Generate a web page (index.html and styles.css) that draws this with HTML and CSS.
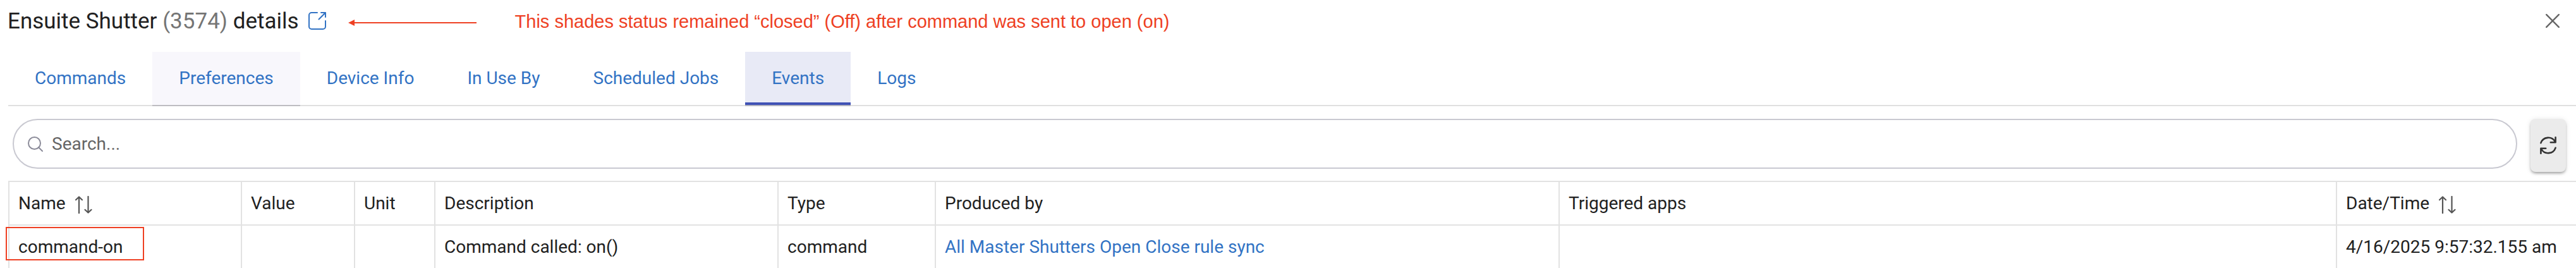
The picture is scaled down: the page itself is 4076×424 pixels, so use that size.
FILE: index.html
```html
<!DOCTYPE html>
<html lang="en">
<head>
  <meta charset="UTF-8">
  <meta name="viewport" content="width=device-width, initial-scale=1.0">
  <title>Ensuite Shutter details</title>
  <link rel="stylesheet" href="styles.css">
</head>
<body>
  <header class="title-bar">
    <h1>Ensuite Shutter <span class="device-id">(3574)</span> details</h1>
    <a class="open-link" href="#">
      <svg width="28" height="28" viewBox="0 0 28 28" fill="none" stroke="#3273c4" stroke-width="2" stroke-linecap="round" stroke-linejoin="round">
        <path d="M14 1H5a4 4 0 0 0-4 4V23a4 4 0 0 0 4 4H23a4 4 0 0 0 4-4V14"/>
        <path d="M16.500 11.500L27 1M20 1h7v7"/>
      </svg>
    </a>
    <svg class="arrow" width="203" height="10" viewBox="0 0 203 10">
      <path d="M0 5L10 0v10z" fill="#ee4023"/>
      <path d="M8 5h195" stroke="#ee4023" stroke-width="2"/>
    </svg>
    <p class="note">This shades status remained “closed” (Off) after command was sent to open (on)</p>
    <button class="close-btn" aria-label="Close">
      <svg width="22" height="22" viewBox="0 0 22 22" stroke="#666" stroke-width="2.400" stroke-linecap="round">
        <path d="M1.200 1.200l19.600 19.600M20.800 1.200L1.200 20.800"/>
      </svg>
    </button>
  </header>

  <nav class="tabs">
    <a href="#">Commands</a>
    <a href="#" class="hovered">Preferences</a>
    <a href="#">Device Info</a>
    <a href="#">In Use By</a>
    <a href="#">Scheduled Jobs</a>
    <a href="#" class="active">Events</a>
    <a href="#">Logs</a>
  </nav>

  <div class="toolbar">
    <div class="search">
      <svg width="24" height="24" viewBox="0 0 24 24" fill="none" stroke="#8b8b99" stroke-width="2">
        <circle cx="10.500" cy="10.500" r="9.500"/>
        <path d="M17 17l6 6" stroke-linecap="round"/>
      </svg>
      <span>Search...</span>
    </div>
    <button class="refresh-btn" aria-label="Refresh">
      <svg width="26" height="28" viewBox="0 0 26 28" fill="none" stroke="#333" stroke-width="2.600" stroke-linecap="round" stroke-linejoin="round">
        <path d="M1.400 10.200A12.300 12.300 0 0 1 24 8.500M24.600 1.300V9.200H16.800"/>
        <path d="M24.600 17.800A12.300 12.300 0 0 1 2 19.500M1.400 26.700V18.800H9.200"/>
      </svg>
    </button>
  </div>

  <table class="events">
    <colgroup>
      <col class="c-name"><col class="c-value"><col class="c-unit"><col class="c-desc">
      <col class="c-type"><col class="c-produced"><col class="c-apps"><col class="c-date">
    </colgroup>
    <thead>
      <tr>
        <th>Name
          <svg class="sort" width="27" height="28" viewBox="0 0 27 28" fill="none" stroke="#555" stroke-width="2.200" stroke-linecap="round" stroke-linejoin="round">
            <path d="M6 27V1.500M1 6.200l5-4.700 5 4.700M20.500 1v25.500M15.500 21.800l5 4.700 5-4.700"/>
          </svg>
        </th>
        <th>Value</th>
        <th>Unit</th>
        <th>Description</th>
        <th>Type</th>
        <th>Produced by</th>
        <th>Triggered apps</th>
        <th>Date/Time
          <svg class="sort" width="27" height="28" viewBox="0 0 27 28" fill="none" stroke="#555" stroke-width="2.200" stroke-linecap="round" stroke-linejoin="round">
            <path d="M6 27V1.500M1 6.200l5-4.700 5 4.700M20.500 1v25.500M15.500 21.800l5 4.700 5-4.700"/>
          </svg>
        </th>
      </tr>
    </thead>
    <tbody>
      <tr>
        <td class="marked">command-on</td>
        <td></td>
        <td></td>
        <td>Command called: on()</td>
        <td>command</td>
        <td><a href="#">All Master Shutters Open Close rule sync</a></td>
        <td></td>
        <td>4/16/2025 9:57:32.155 am</td>
      </tr>
    </tbody>
  </table>
</body>
</html>
```
FILE: styles.css
```css
* {
  box-sizing: border-box;
}

body {
  margin: 0;
  height: 424px;
  overflow: hidden;
  background: #fff;
  color: #212121;
  font-family: Roboto, sans-serif;
  font-size: 28px;
}

a {
  color: #3273c4;
  text-decoration: none;
}

button {
  border: none;
  padding: 0;
  background: none;
}

svg {
  display: block;
}

.title-bar {
  display: flex;
  align-items: center;
  height: 82px;
  padding: 0 26px 16px 12px;
}

h1 {
  margin: 0;
  font-size: 35px;
  font-weight: 400;
  white-space: nowrap;
}

.device-id {
  color: #757575;
}

.open-link {
  margin-left: 15px;
}

.arrow {
  margin: 6px 0 0 35px;
}

.note {
  margin: 2px 0 0 61px;
  color: #ee4023;
  font-family: "Liberation Sans", sans-serif;
  font-size: 29px;
  white-space: nowrap;
}

.close-btn {
  margin-left: auto;
}

.tabs {
  display: flex;
  height: 86px;
  margin-left: 13px;
  border-bottom: 2px solid #e0e0e0;
}

.tabs a {
  height: 86px;
  padding: 0 42px;
  border-bottom: 2px solid #e0e0e0;
  line-height: 83px;
}

.tabs .hovered {
  background: #f8f7fc;
  border-bottom-color: #bdbcc1;
}

.tabs .active {
  background: #e8eaf6;
  border-bottom-color: #b4b5c0;
  box-shadow: inset 0 -4px #3f51b5;
}

.toolbar {
  display: flex;
  gap: 21px;
  height: 118px;
  padding: 20px 16px 0 20px;
}

.search {
  flex: 1;
  display: flex;
  align-items: center;
  gap: 14px;
  height: 79px;
  padding-left: 22px;
  border: 2px solid #c9c9d1;
  border-radius: 40px;
  color: #666;
}

.refresh-btn {
  display: flex;
  align-items: center;
  justify-content: center;
  width: 56px;
  height: 84px;
  border-radius: 8px;
  background: #ebebeb;
  box-shadow: 0 3px 4px -1px rgba(0, 0, 0, 0.35), 0 1px 8px rgba(0, 0, 0, 0.1);
}

.events {
  width: 4083px;
  margin-left: 13px;
  border-collapse: separate;
  border-spacing: 0;
  border-top: 2px solid #e2e2e2;
  table-layout: fixed;
}

.c-name { width: 368px; }
.c-value { width: 179px; }
.c-unit { width: 127px; }
.c-desc { width: 543px; }
.c-type { width: 249px; }
.c-produced { width: 987px; }
.c-apps { width: 1230px; }
.c-date { width: 400px; }

.events th,
.events td {
  height: 69px;
  padding: 0 0 0 14px;
  border-left: 2px solid #e2e2e2;
  font-weight: 400;
  text-align: left;
  white-space: nowrap;
}

.events th {
  border-bottom: 2px solid #e2e2e2;
}

.events td {
  height: 67px;
}

.sort {
  display: inline-block;
  margin-left: 8px;
  vertical-align: -7px;
}

.marked {
  position: relative;
}

/* red highlight box around the event name */
.marked::after {
  content: "";
  position: absolute;
  top: 2px;
  left: -6px;
  box-sizing: border-box;
  width: 219px;
  height: 53px;
  border: 2px solid #ee4023;
}
```
